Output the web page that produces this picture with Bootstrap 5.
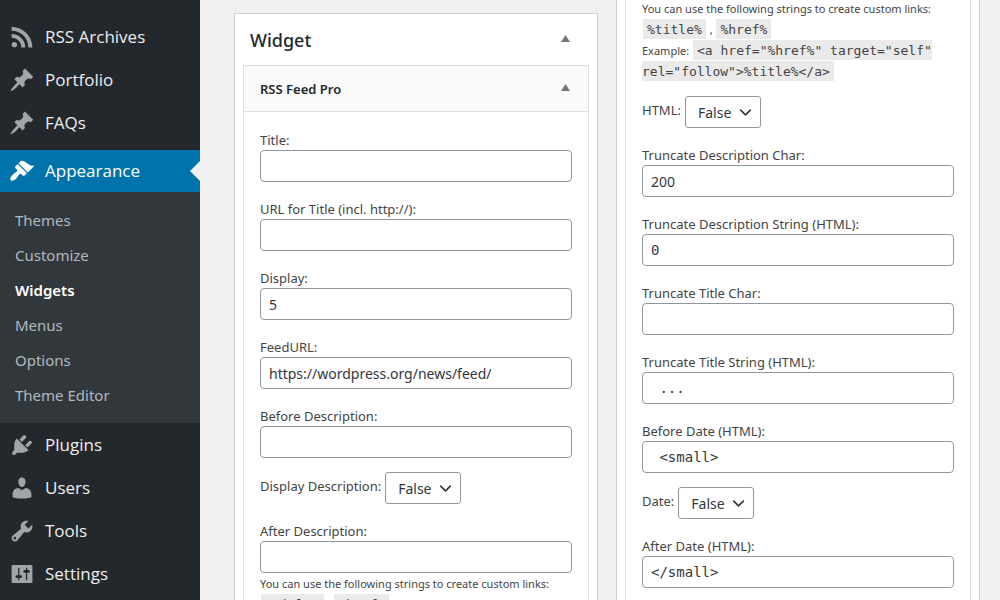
<!DOCTYPE html>
<html lang="en">
<head>
<meta charset="utf-8">
<meta name="viewport" content="width=device-width, initial-scale=1">
<title>Widgets</title>
<link href="https://cdn.jsdelivr.net/npm/bootstrap@5.3.0/dist/css/bootstrap.min.css" rel="stylesheet">
<style>
  body { font-family: "Noto Sans", "Open Sans", sans-serif; font-size: 13px; color: #444; background: #f0f0f0; }
  .admin-menu { width: 200px; background: #23282d; padding-top: 15px; }
  .menu-row { height: 43px; padding-left: 9px; gap: 10px; font-family: "Open Sans", "Noto Sans", sans-serif; font-size: 17px; color: #eee; text-decoration: none; }
  .menu-row svg { width: 26px; height: 26px; fill: #a0a5aa; flex: none; }
  .menu-row.current { height: 42px; margin-top: 6px; background: #0073aa; color: #fff; }
  .menu-row.current svg { fill: #fff; }
  .menu-row.current::after { content: ""; position: absolute; right: 0; top: 11px; border: 10px solid transparent; border-left: 0; border-right-color: #f0f0f0; }
  .submenu { background: #32373c; padding: 11px 0 10px 15px; }
  .submenu a { display: block; height: 35px; line-height: 35px; font-size: 15px; color: #b4b9be; text-decoration: none; }
  .submenu a.current { color: #fff; font-weight: 600; }
  .main-area { padding: 0 20px 0 34px; gap: 18px; }
  .panel { flex: 1 1 0; min-width: 0; background: #fff; border: 1px solid #ccd0d4; border-bottom: 0; padding: 0 8px; }
  .panel-first { margin-top: 13px; }
  .panel-next { margin-top: -2px; border-top: 0; }
  .panel-title { height: 51px; flex: none; padding: 2px 19px 0 7px; font-size: 18px; font-weight: 500; color: #23282d; }
  .widget-box { border: 1px solid #dcdee0; border-bottom: 0; flex: 1 0 auto; }
  .panel-next .widget-box { border-top: 0; }
  .widget-top { height: 46px; padding: 2px 18px 0 16px; background: #fafafa; border-bottom: 1px solid #dcdee0; font-size: 13px; font-weight: 600; color: #23282d; }
  .toggle { border: 0; background: none; padding: 0 0 4px; line-height: 0; }
  .toggle svg { width: 9px; height: 7px; fill: #72777c; }
  .widget-body { padding: 0 16px; }
  .panel-first .widget-body { padding-top: 1px; }
  .field { margin-top: 18px; }
  .field label, .pick label { line-height: 19px; }
  .field label { display: block; }
  .field .form-control { height: 32px; padding: 0 8px; font-size: 14px; border: 1px solid #8f98a1; border-radius: 4px; color: #32373c; }
  .field .code-input { font-family: "DejaVu Sans Mono", monospace; }
  .pick { margin-top: 14px; gap: 4px; }
  .pick label { padding-bottom: 3px; }
  .pick .form-select { width: 76px; height: 32px; padding: 1px 26px 0 12px; font-size: 14px; border: 1px solid #8f98a1; border-radius: 3px; color: #32373c; background-position: right 8px center; background-size: 13px 13px; }
  .hint { font-size: 11px; line-height: 21px; }
  .hint code { font-family: "DejaVu Sans Mono", monospace; font-size: 13px; line-height: 1; color: #444; background: #eaeaea; padding: 3px 4px 2px; margin: 0 1px; }
</style>
</head>
<body>
<div class="d-flex vh-100 overflow-hidden">
  <nav class="admin-menu flex-shrink-0" aria-label="Main menu">
    <a class="menu-row d-flex align-items-center" href="#"><svg viewBox="0 0 20 20"><path d="M14.92 18H18C18 9.32 10.82 2.25 2 2.25v2.98c7.12 0 12.92 5.71 12.92 12.77zm-5.44 0h3.08C12.56 12.27 7.82 7.6 2 7.6v2.98c2 0 3.87.77 5.29 2.16C8.7 14.14 9.48 16.01 9.48 18zm-5.35-.02c1.17 0 2.13-.93 2.13-2.09 0-1.15-.96-2.09-2.13-2.09-1.18 0-2.13.94-2.13 2.09 0 1.16.95 2.09 2.13 2.09z"/></svg>RSS Archives</a>
    <a class="menu-row d-flex align-items-center" href="#"><svg viewBox="0 0 20 20"><path id="pin" d="M10.44 3.02l1.82-1.82 6.36 6.35-1.83 1.82c-1.05-.68-2.48-.57-3.41.36l-.75.75c-.92.93-1.04 2.35-.35 3.41l-1.83 1.82-2.41-2.41-2.8 2.79c-.42.42-3.38 2.71-3.8 2.29s1.86-3.39 2.28-3.81l2.79-2.79L4.1 9.36l1.83-1.82c1.05.69 2.48.57 3.4-.36l.75-.75c.93-.92 1.05-2.35.36-3.41z"/></svg>Portfolio</a>
    <a class="menu-row d-flex align-items-center" href="#"><svg viewBox="0 0 20 20"><use href="#pin"/></svg>FAQs</a>
    <a class="menu-row current d-flex align-items-center position-relative" href="#"><svg viewBox="0 0 20 20"><path d="M14.48 11.06L7.41 3.99l1.5-1.5c.5-.56 2.3-.47 3.51.32 1.21.8 1.43 1.28 2.91 2.1 1.18.64 2.45 1.26 4.45.85zm-.71.71L6.7 4.7 4.93 6.47c-.39.39-.39 1.02 0 1.41l1.06 1.06c.39.39.39 1.03 0 1.42-.6.6-1.43 1.11-2.21 1.69-.35.26-.7.53-1.01.84C1.43 14.23.4 16.08 1.4 17.07c.99 1 2.84-.03 4.18-1.36.31-.31.58-.66.85-1.02.57-.78 1.08-1.61 1.69-2.21.39-.39 1.02-.39 1.41 0l1.06 1.06c.39.39 1.02.39 1.41 0z"/></svg>Appearance</a>
    <div class="submenu">
      <a href="#">Themes</a>
      <a href="#">Customize</a>
      <a class="current" href="#" aria-current="page">Widgets</a>
      <a href="#">Menus</a>
      <a href="#">Options</a>
      <a href="#">Theme Editor</a>
    </div>
    <a class="menu-row d-flex align-items-center" href="#"><svg viewBox="0 0 20 20"><path d="M13.11 4.36L9.87 7.6 8 5.73l3.24-3.24c.35-.34 1.05-.2 1.56.32.52.51.66 1.21.31 1.55zm-8 1.77l.91-1.12 9.01 9.01-1.19.84c-.71.71-2.63 1.16-3.82 1.16H6.14L4.9 17.26c-.59.59-1.54.59-2.12 0-.59-.58-.59-1.53 0-2.12l1.24-1.24v-3.88c0-1.13.4-3.19 1.09-3.89zm7.26 3.97l3.24-3.24c.34-.35 1.04-.21 1.55.31.52.51.66 1.21.31 1.55l-3.24 3.25z"/></svg>Plugins</a>
    <a class="menu-row d-flex align-items-center" href="#"><svg viewBox="0 0 20 20"><path d="M10 9.25c-2.27 0-2.73-3.44-2.73-3.44C7 4.02 7.82 2 9.97 2c2.16 0 2.98 2.02 2.71 3.81 0 0-.41 3.44-2.68 3.44zm0 2.57L12.72 10c2.39 0 4.52 2.33 4.52 4.53v2.49s-3.65 1.13-7.24 1.13c-3.65 0-7.24-1.13-7.24-1.13v-2.49c0-2.25 1.94-4.48 4.47-4.48z"/></svg>Users</a>
    <a class="menu-row d-flex align-items-center" href="#"><svg viewBox="0 0 20 20"><path d="M16.68 9.77c-1.34 1.34-3.3 1.67-4.95.99l-5.41 6.52c-.99.99-2.59.99-3.58 0s-.99-2.59 0-3.57l6.52-5.42c-.68-1.65-.35-3.61.99-4.95 1.28-1.28 3.12-1.62 4.72-1.06l-2.89 2.89 2.82 2.82 2.86-2.87c.53 1.58.18 3.39-1.08 4.65zM3.81 16.21c.4.39 1.04.39 1.43 0 .4-.4.4-1.04 0-1.43-.39-.4-1.03-.4-1.43 0-.39.39-.39 1.03 0 1.43z"/></svg>Tools</a>
    <a class="menu-row d-flex align-items-center" href="#"><svg viewBox="0 0 20 20"><path d="M18 16V4c0-.55-.45-1-1-1H3c-.55 0-1 .45-1 1v12c0 .55.45 1 1 1h14c.55 0 1-.45 1-1zM8 11h1c.55 0 1 .45 1 1s-.45 1-1 1H8v1.5c0 .28-.22.5-.5.5s-.5-.22-.5-.5V13H6c-.55 0-1-.45-1-1s.45-1 1-1h1V5.5c0-.28.22-.5.5-.5s.5.22.5.5V11zm5-2h-1c-.55 0-1-.45-1-1s.45-1 1-1h1V5.5c0-.28.22-.5.5-.5s.5.22.5.5V7h1c.55 0 1 .45 1 1s-.45 1-1 1h-1v5.5c0 .28-.22.5-.5.5s-.5-.22-.5-.5V9z"/></svg>Settings</a>
  </nav>

  <main class="main-area d-flex flex-grow-1">
    <section class="panel panel-first d-flex flex-column">
      <div class="panel-title d-flex align-items-center justify-content-between">Widget
        <button class="toggle" type="button" aria-label="Toggle area"><svg viewBox="0 0 9 7"><path d="M4.500 0L9 7H0z"/></svg></button>
      </div>
      <div class="widget-box">
        <div class="widget-top d-flex align-items-center justify-content-between">RSS Feed Pro
          <button class="toggle" type="button" aria-label="Toggle widget"><svg viewBox="0 0 9 7"><path d="M4.500 0L9 7H0z"/></svg></button>
        </div>
        <div class="widget-body">
          <div class="field"><label for="title">Title:</label><input class="form-control" id="title" type="text"></div>
          <div class="field"><label for="title-url">URL for Title (incl. http://):</label><input class="form-control" id="title-url" type="text"></div>
          <div class="field"><label for="display">Display:</label><input class="form-control" id="display" type="text" value="5"></div>
          <div class="field"><label for="feed">FeedURL:</label><input class="form-control" id="feed" type="text" value="https://wordpress.org/news/feed/"></div>
          <div class="field"><label for="before-desc">Before Description:</label><input class="form-control" id="before-desc" type="text"></div>
          <div class="pick d-flex align-items-center"><label for="show-desc">Display Description:</label><select class="form-select" id="show-desc"><option>False</option><option>True</option></select></div>
          <div class="field"><label for="after-desc">After Description:</label><input class="form-control" id="after-desc" type="text"></div>
          <div class="hint">You can use the following strings to create custom links:<br><code>%title%</code> , <code>%href%</code></div>
        </div>
      </div>
    </section>

    <section class="panel panel-next d-flex flex-column">
      <div class="widget-box">
        <div class="widget-body">
          <div class="hint">You can use the following strings to create custom links:<br><code>%title%</code> , <code>%href%</code><br>Example: <code>&lt;a href="%href%" target="self" rel="follow"&gt;%title%&lt;/a&gt;</code></div>
          <div class="pick d-flex align-items-center"><label for="html">HTML:</label><select class="form-select" id="html"><option>False</option><option>True</option></select></div>
          <div class="field"><label for="desc-char">Truncate Description Char:</label><input class="form-control" id="desc-char" type="text" value="200"></div>
          <div class="field"><label for="desc-string">Truncate Description String (HTML):</label><input class="form-control code-input" id="desc-string" type="text" value="0"></div>
          <div class="field"><label for="title-char">Truncate Title Char:</label><input class="form-control" id="title-char" type="text"></div>
          <div class="field"><label for="title-string">Truncate Title String (HTML):</label><input class="form-control code-input" id="title-string" type="text" value=" ..."></div>
          <div class="field"><label for="before-date">Before Date (HTML):</label><input class="form-control code-input" id="before-date" type="text" value=" &lt;small&gt;"></div>
          <div class="pick d-flex align-items-center"><label for="date">Date:</label><select class="form-select" id="date"><option>False</option><option>True</option></select></div>
          <div class="field"><label for="after-date">After Date (HTML):</label><input class="form-control code-input" id="after-date" type="text" value="&lt;/small&gt;"></div>
        </div>
      </div>
    </section>
  </main>
</div>
<script src="https://cdn.jsdelivr.net/npm/bootstrap@5.3.0/dist/js/bootstrap.bundle.min.js"></script>
</body>
</html>
